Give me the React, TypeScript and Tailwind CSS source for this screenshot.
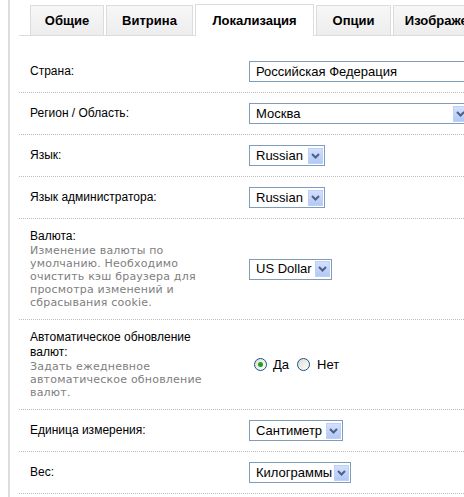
import React from "react";

const tabs = [
  { label: "Общие", w: "w-[74px]" },
  { label: "Витрина", w: "w-[87px]" },
  { label: "Локализация", w: "w-[119px]", active: true },
  { label: "Опции", w: "w-[75px]" },
  { label: "Изображения", w: "w-[110px]" },
];

function Chevron() {
  return (
    <span className="flex h-[16px] w-[15px] shrink-0 items-center justify-center border border-[#bcd0f8] bg-gradient-to-b from-[#d3e0fd] to-[#b3c8f6]">
      <svg width="9" height="6" viewBox="0 0 9 6">
        <path d="M1 1 L4.5 4.5 L8 1" fill="none" stroke="#4d6185" strokeWidth="2" />
      </svg>
    </span>
  );
}

function Select({ value, w }: { value: string; w: string }) {
  return (
    <div className={`flex h-[21px] ${w} items-center justify-between border border-[#7f9db9] bg-white pl-[6px] pr-[1px] text-[13px] text-black`}>
      <span className="whitespace-nowrap">{value}</span>
      <Chevron />
    </div>
  );
}

function Radio({ checked }: { checked?: boolean }) {
  return (
    <span className="flex h-[13px] w-[13px] items-center justify-center rounded-full border border-[#1c5180] bg-gradient-to-br from-[#dcdcd6] to-[#ffffff]">
      {checked && <span className="h-[5px] w-[5px] rounded-full bg-[#21a121]" />}
    </span>
  );
}

function Row({ label, desc, children }: { label: React.ReactNode; desc?: string[]; children: React.ReactNode }) {
  return (
    <div className="flex border-b border-dotted border-[#bdbdbd]">
      <div className="w-[230px] shrink-0 py-[10px] pl-[11px]">
        <div
          className={`flex flex-col justify-center text-[12px] leading-[15px] text-black ${desc ? "" : "min-h-[21px]"}`}
        >
          {label}
        </div>
        {desc && (
          <div className="font-['DejaVu_Sans',sans-serif] text-[11px] leading-[13px] tracking-[0.2px] text-[#808080]">
            {desc.map((d) => (
              <div key={d}>{d}</div>
            ))}
          </div>
        )}
      </div>
      <div className="flex items-center">{children}</div>
    </div>
  );
}

export default function App() {
  return (
    <div className="h-[497px] w-[464px] overflow-hidden bg-white pl-[8px] font-['Liberation_Sans',Arial,sans-serif]">
      <div className="h-full w-[560px] border-l-2 border-[#dcdcdc] pl-[9px]">
        {/* Tabs */}
        <div className="flex h-[36px] items-end gap-[2px] border-b border-[#dcdcdc] pl-[11px]">
          {tabs.map((t) =>
            t.active ? (
              <div
                key={t.label}
                className={`${t.w} -mb-px flex h-[32px] items-center justify-center border border-b-0 border-[#dcdcdc] bg-white text-[13px] font-bold text-black`}
              >
                {t.label}
              </div>
            ) : (
              <div
                key={t.label}
                className={`${t.w} flex h-[30px] items-center justify-center border border-b-0 border-[#dcdcdc] bg-gradient-to-b from-[#f7f7f7] to-[#ededed] text-[13px] font-bold text-black`}
              >
                {t.label}
              </div>
            )
          )}
        </div>

        {/* Settings */}
        <div className="mt-[15px]">
          <Row label="Страна:">
            <div className="flex h-[21px] w-[221px] items-center border border-[#7f9db9] pl-[6px] text-[13px]">
              Российская Федерация
            </div>
          </Row>
          <Row label="Регион / Область:">
            <Select value="Москва" w="w-[221px]" />
          </Row>
          <Row label="Язык:">
            <Select value="Russian" w="w-[76px]" />
          </Row>
          <Row label="Язык администратора:">
            <Select value="Russian" w="w-[76px]" />
          </Row>
          <Row
            label="Валюта:"
            desc={[
              "Изменение валюты по",
              "умолчанию. Необходимо",
              "очистить кэш браузера для",
              "просмотра изменений и",
              "сбрасывания cookie.",
            ]}
          >
            <Select value="US Dollar" w="w-[83px]" />
          </Row>
          <Row
            label={
              <>
                <div>Автоматическое обновление</div>
                <div>валют:</div>
              </>
            }
            desc={["Задать ежедневное", "автоматическое обновление", "валют."]}
          >
            <div className="flex items-center pl-[5px] text-[13px]">
              <Radio checked />
              <span className="ml-[6px]">Да</span>
              <span className="ml-[8px]">
                <Radio />
              </span>
              <span className="ml-[7px]">Нет</span>
            </div>
          </Row>
          <Row label="Единица измерения:">
            <Select value="Сантиметр" w="w-[94px]" />
          </Row>
          <Row label="Вес:">
            <Select value="Килограммы" w="w-[102px]" />
          </Row>
        </div>
      </div>
    </div>
  );
}
